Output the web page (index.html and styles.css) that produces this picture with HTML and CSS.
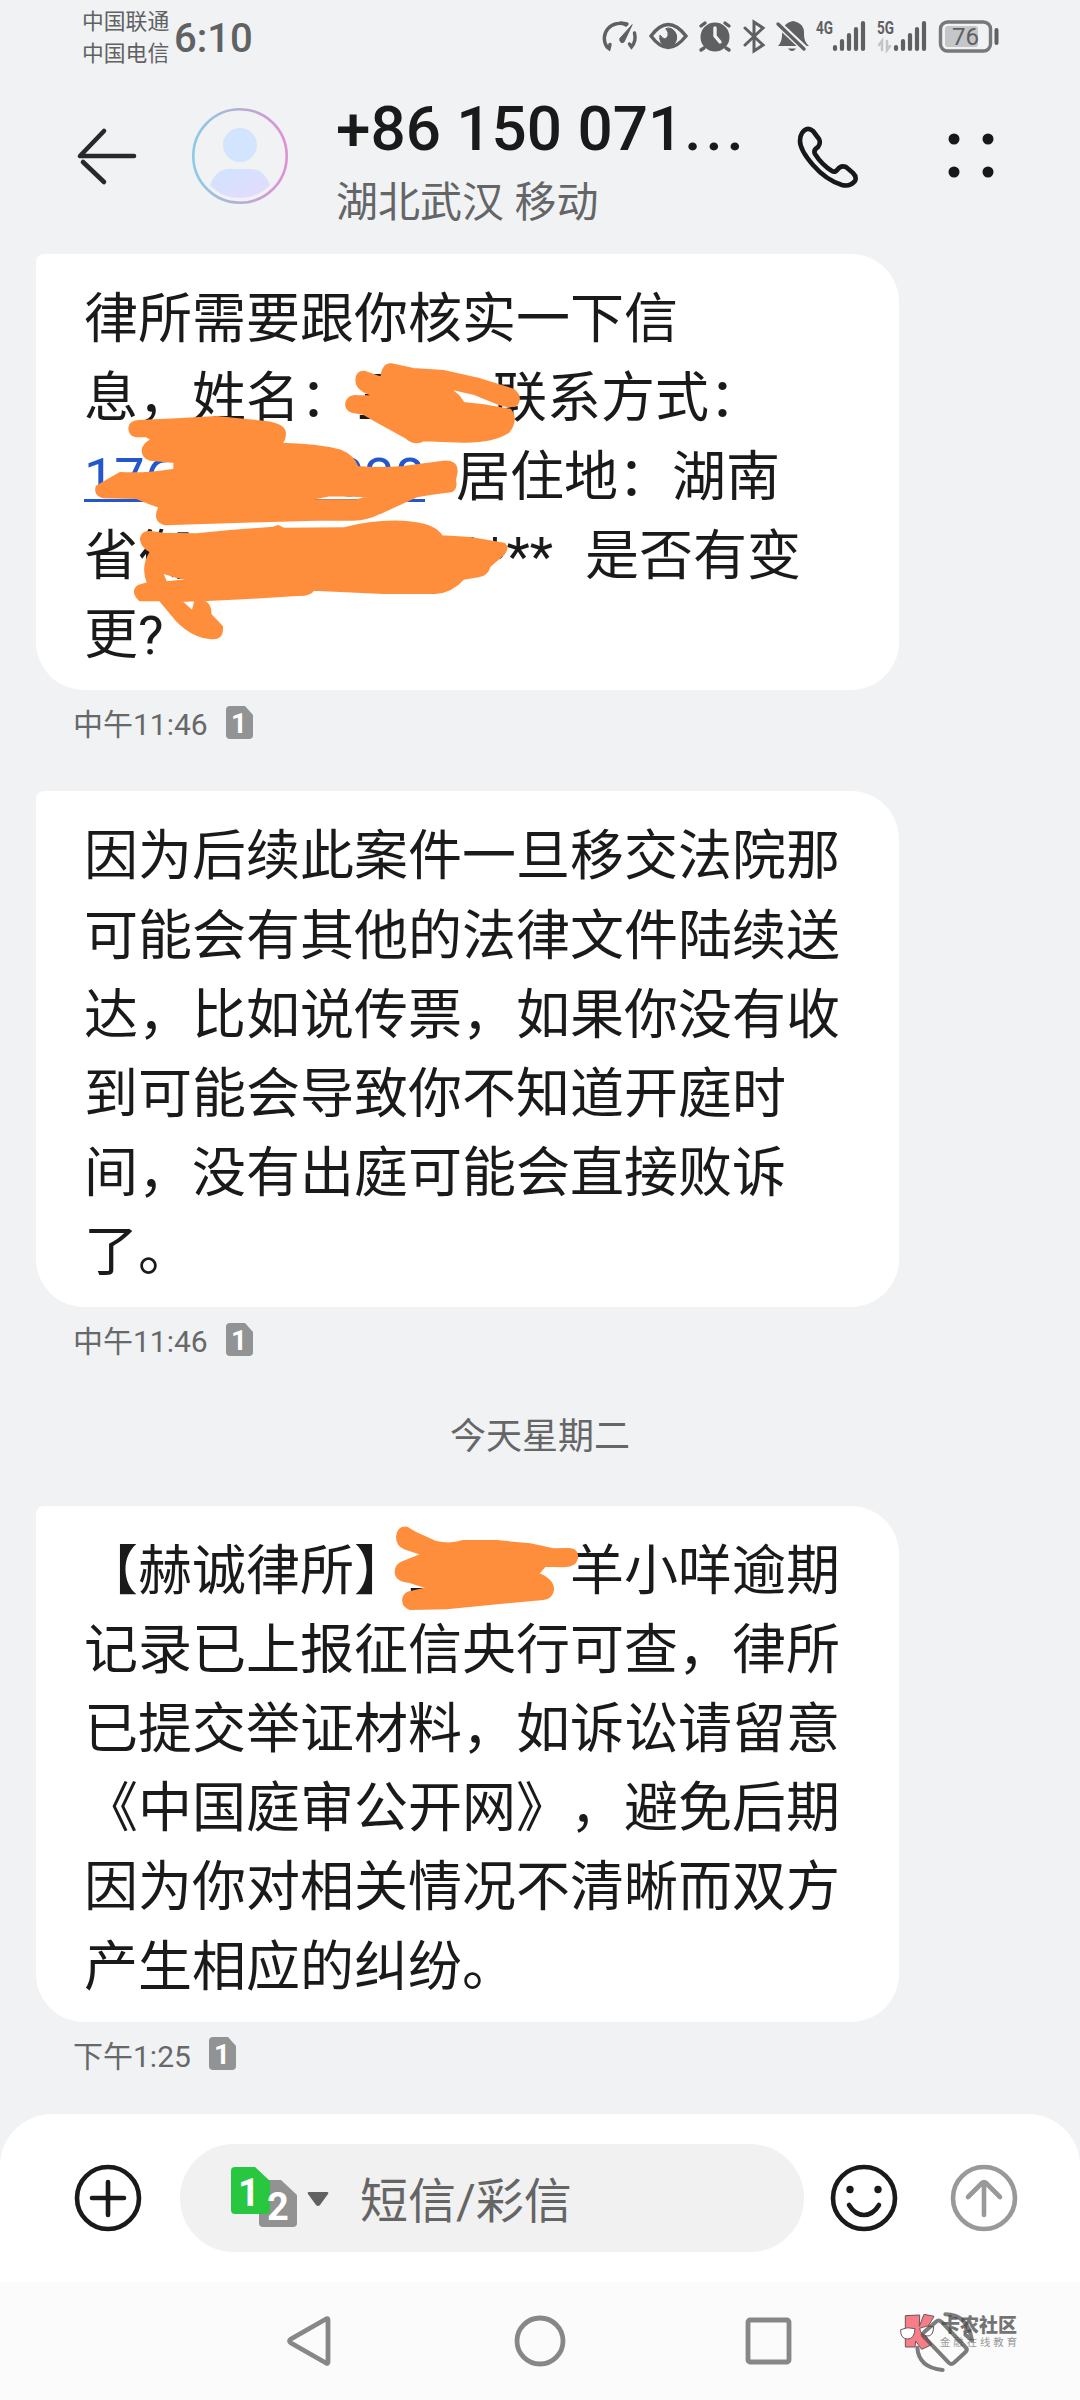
FILE: index.html
```html
<!DOCTYPE html>
<html lang="zh-CN">
<head>
<meta charset="utf-8">
<title>短信</title>
<link rel="stylesheet" href="styles.css">
</head>
<body>
<div class="phone">
  <header class="status">
    <div class="carriers"><span>中国联通</span><span>中国电信</span></div>
    <div class="clock">6:10</div>
    <svg class="status-icons" width="420" height="60" viewBox="0 0 420 60" fill="none" stroke="#5f6062" stroke-width="3.4" stroke-linecap="round">
      <path d="M26 25a15 15 0 0 0-19 22l2 1.500 1-4M34.500 33q2 8-3 14l-2-3M27 24l-6-1"/><path d="M32 25L24 42q-3 2-4-1t1-4z" fill="#5f6062" stroke-width="1"/>
      <path d="M51 36q17-23 35 0q-18 23-35 0z"/><path d="M69 28a8.500 9.500 0 1 1-9 7q5 7 8 1q1-4-2-7z" fill="#5f6062" stroke-width="1"/>
      <circle cx="115" cy="37" r="14.500" fill="#5f6062" stroke="none"/><path d="M101 26l4-3M129 26l-4-3M104 48l-3 2M126 48l3 2"/><path d="M115 28v8l5 6" stroke="#f1f2f4"/>
      <path d="M145 28l18 17-9 6V22l9 6-18 17" stroke-width="3"/>
      <path d="M178 46q4-4 4-11q0-12 11-14q12 2 11 14q0 7 5 11z" fill="#5f6062" stroke="none"/><path d="M173 19l36 34" stroke="#f1f2f4" stroke-width="7"/><path d="M178 24l26 25" stroke-width="3.400"/><path d="M188 48.500h8q-4 5-8 0z" fill="#5f6062" stroke="none"/>
      <g stroke-width="4.200"><path d="M235 47v2M242 41v8M249 35v14M256 29v20M263 23v26M296 47v2M303 41v8M310 35v14M317 29v20M324 23v26"/></g>
      <g stroke="#c3c4c6" stroke-width="2.500"><path d="M282 50V41l-3 4M287 41v9l3-4"/></g>
      <rect x="340.500" y="22" width="50" height="29" rx="7" stroke="#77787a" stroke-width="3.400"/><rect x="345" y="26" width="33" height="21" rx="3" fill="#c5c6c8" stroke="none"/><path d="M396.500 30v13" stroke-width="4"/>
      <g class="status-text"><text x="216" y="34" textLength="17" lengthAdjust="spacingAndGlyphs">4G</text><text x="277" y="34" textLength="17" lengthAdjust="spacingAndGlyphs">5G</text><text class="battery" x="352" y="45">76</text></g>
    </svg>
  </header>

  <section class="contact">
    <svg class="back" width="64" height="60" viewBox="0 0 64 60" fill="none" stroke="#28292b" stroke-width="4.600" stroke-linecap="round" stroke-linejoin="round"><path d="M29 5L5 30h54M8 36l21 20"/></svg>
    <svg class="avatar" width="98" height="98" viewBox="0 0 98 98">
      <defs><linearGradient id="ring"><stop offset="0" stop-color="#8ccbe8"/><stop offset=".5" stop-color="#b5add5"/><stop offset="1" stop-color="#df91d6"/></linearGradient><linearGradient id="person" x2="1" y2="1"><stop offset="0" stop-color="#cfe4fc"/><stop offset="1" stop-color="#e6daff"/></linearGradient></defs>
      <circle cx="49" cy="49" r="46.700" fill="none" stroke="url(#ring)" stroke-width="2.600"/><circle cx="49" cy="38" r="17" fill="#d2e4fe"/><path d="M19 78q6-16 19-16h22q13 0 19 16q-12 13-30 13T19 78z" fill="url(#person)"/>
    </svg>
    <div class="who"><h1>+86 150 071<span class="dots">...</span></h1><p>湖北武汉 移动</p></div>
    <svg class="call" width="64" height="64" viewBox="0 0 64 64" fill="none" stroke="#17181a" stroke-width="4.600" stroke-linejoin="round"><path d="M6 9q5-7 11-2l6 8q2 4-1 8q-5 3-3 7q7 11 17 17q3 2 6-2q3-4 8-2l7 6q4 4 2 8q-5 6-13 4Q30 56 17 41T4 17q0-5 2-8z"/></svg>
    <svg class="more" width="48" height="48" viewBox="0 0 48 48" fill="#17181a"><circle cx="7" cy="7" r="5.500"/><circle cx="41" cy="7" r="5.500"/><circle cx="7" cy="40" r="5.500"/><circle cx="41" cy="40" r="5.500"/></svg>
  </section>

  <main class="thread">
    <article class="message">
      <div class="bubble">
        <div>律所需要跟你核实一下信</div>
        <div class="line"><span>息，姓名：</span><span class="gap name"><i>王</i></span><span>联系方式：</span></div>
        <div class="line"><span class="link"><span>176</span><span>038</span></span><span class="place">居住地：湖南</span></div>
        <div class="line"><span>省</span><span class="gap address"><i>衡</i><b>****</b></span><span>是否有变</span></div>
        <div>更?</div>
        <svg class="marks" width="500" height="420" viewBox="0 0 1500 1260" fill="#ff8e3c" stroke="#ff8e3c" stroke-width="8" stroke-linejoin="round" fill-rule="evenodd">
          <path d="M980 390Q980 365 1003 366L1055 385Q1058 342 1084 344L1150 358 1240 364 1344 387 1450 420Q1475 440 1460 463 1440 474 1400 458L1330 430 1252 412 1285 438 1300 460 1360 467 1440 480Q1463 510 1435 545 1390 575 1300 574L1180 570Q1155 584 1130 563L1040 513 1000 490 965 484Q945 475 951 455 960 435 985 440L1040 440 1000 422Q980 410 980 390Z"/>
          <path d="M299 535Q300 516 325 514L440 509 560 502 680 514Q765 520 764 550 764 570 752 582 860 584 930 602 970 618 982 652 1050 658 1120 652L1240 636Q1280 633 1279 665L1274 690Q1282 725 1250 724 1200 730 1160 738L1050 788Q1010 808 970 808L860 808 640 814 405 822Q368 812 390 770 355 758 320 743L220 741Q194 735 201 710L270 670Q350 674 434 660L434 635 360 628Q335 618 340 594 350 574 370 570L350 558 320 558Q300 555 299 535ZM780 758L860 752 980 752 1025 738 900 735Z"/>
          <path d="M334 865Q338 845 360 847L400 852 500 854 600 844 730 834 745 829 760 837 940 836Q1030 812 1120 816 1215 822 1235 860L1322 865 1422 882Q1435 895 1420 912L1378 948Q1370 975 1345 978L1300 985Q1265 1025 1215 1028L1060 1028 850 1018Q840 1036 800 1034L640 1044 515 1050Q542 1062 541 1095L575 1130Q578 1170 540 1163 490 1160 440 1110L390 1050 330 1050Q304 1025 325 1009L355 1000Q334 950 364 905 334 890 334 865ZM394 965L408 998 488 990 440 980ZM450 1052L488 1086 498 1050Z"/>
        </svg>
      </div>
      <div class="meta"><span>中午11:46</span><svg class="sim" width="27" height="33" viewBox="0 0 27 33"><path d="M4 0h15l8 9v20q0 4-4 4H4q-4 0-4-4V4q0-4 4-4z"/><text x="13" y="27">1</text></svg></div>
    </article>

    <article class="message">
      <div class="bubble">
        <div>因为后续此案件一旦移交法院那</div>
        <div>可能会有其他的法律文件陆续送</div>
        <div>达，比如说传票，如果你没有收</div>
        <div>到可能会导致你不知道开庭时</div>
        <div>间，没有出庭可能会直接败诉</div>
        <div>了。</div>
      </div>
      <div class="meta"><span>中午11:46</span><svg class="sim" width="27" height="33" viewBox="0 0 27 33"><path d="M4 0h15l8 9v20q0 4-4 4H4q-4 0-4-4V4q0-4 4-4z"/><text x="13" y="27">1</text></svg></div>
    </article>

    <div class="date">今天星期二</div>

    <article class="message">
      <div class="bubble">
        <div class="line"><span>【赫诚律所】</span><span class="gap client"><i>王</i></span><span>羊小咩逾期</span></div>
        <div>记录已上报征信央行可查，律所</div>
        <div>已提交举证材料，如诉讼请留意</div>
        <div>《中国庭审公开网》，避免后期</div>
        <div>因为你对相关情况不清晰而双方</div>
        <div>产生相应的纠纷。</div>
        <svg class="mark-client" width="300" height="130" viewBox="0 0 900 390" fill="#ff8e3c" stroke="#ff8e3c" stroke-width="8" stroke-linejoin="round"><path d="M172 110Q175 82 200 84L225 99 285 126Q330 138 370 124L470 124 570 134 640 149 685 148Q714 148 710 175 704 198 670 198L615 196 593 222Q640 240 638 270 634 293 610 296L520 304 320 324 210 326Q187 318 191 295 195 278 215 276L268 264 205 244Q168 240 168 215 168 195 190 187L250 163 195 145Q172 135 172 110Z"/></svg>
      </div>
      <div class="meta"><span>下午1:25</span><svg class="sim" width="27" height="33" viewBox="0 0 27 33"><path d="M4 0h15l8 9v20q0 4-4 4H4q-4 0-4-4V4q0-4 4-4z"/><text x="13" y="27">1</text></svg></div>
    </article>
  </main>

  <footer class="composer">
    <svg class="round-btn" width="68" height="68" viewBox="0 0 68 68"><circle cx="34" cy="34" r="31"/><path d="M34 18v33M18 34h12M42 34h8M30 34h12"/></svg>
    <div class="field">
      <svg class="sim-picker" width="98" height="62" viewBox="0 0 98 62">
        <path d="M32 13h18l16 15v28q0 4-4 4H32q-4 0-4-4V17q0-4 4-4z" fill="#929292"/><path d="M4 0h20l15 14v29q0 4-4 4H4q-4 0-4-4V4q0-4 4-4z" fill="#29c63f"/>
        <text class="sim-number" x="18" y="39">1</text><text class="sim-number" x="47" y="53">2</text><path d="M78 25h18q2 0 1 2l-8 11q-2 2-4 0l-8-11q-1-2 1-2z" fill="#616161"/>
      </svg>
      <span>短信/彩信</span>
    </div>
    <svg class="round-btn smile" width="68" height="68" viewBox="0 0 68 68"><circle cx="34" cy="34" r="31"/><path d="M19 41q6 10 15 10t15-10"/><circle class="eye" cx="20" cy="25.500" r="3.700"/><circle class="eye" cx="48" cy="25.500" r="3.700"/></svg>
    <svg class="round-btn send" width="68" height="68" viewBox="0 0 68 68"><circle cx="34" cy="34" r="31"/><path d="M34 51V18M18 33l14-14q2-2 4 0l14 14"/></svg>
  </footer>

  <nav class="navbar">
    <svg width="44" height="52" viewBox="0 0 44 52"><path d="M39 4q2-1 2 1v42q0 2-2 1L4 28q-3-2 0-4z"/></svg>
    <svg width="52" height="52" viewBox="0 0 52 52"><circle cx="26" cy="26" r="23"/></svg>
    <svg width="48" height="48" viewBox="0 0 48 48"><rect x="3" y="3" width="41" height="42" rx="2"/></svg>
    <svg class="rotate" width="160" height="80" viewBox="0 0 480 240">
      <g fill="#f77d88" stroke="#6d5558" stroke-width="3"><path d="M76 44l43-2-1 34 14-36 30 6-30 51 23 34-30 14-18-25-2 18H76z"/><path d="M62 86q20-10 43-3-2 32-23 31T62 86zM119 82q22-11 42-5-1 30-20 28t-22-23z" fill="#fff"/></g>
      <g class="brand"><text x="183" y="92" class="brand-name">卡农社区</text><text x="180" y="134" class="brand-sub">金融在线教育</text></g>
      <g fill="none" stroke="#4b4b4b" stroke-opacity=".72" stroke-width="12" stroke-linecap="round" stroke-linejoin="round"><path d="M132 94l36-32q8-7 16 0l72 76q8 8 0 16l-34 31q-8 8-16 0l-75-79q-7-6 1-12z"/><path d="M112 140q4 60 76 67M196 40q67 0 80 78l-20-17"/></g>
    </svg>
  </nav>
</div>
</body>
</html>
```
FILE: styles.css
```css
* { box-sizing: border-box; margin: 0; padding: 0; }
body { background: #f1f2f4; color: #1a1a1b; font-family: Roboto, "Noto Sans CJK SC", sans-serif; text-spacing-trim: space-all; }
svg { display: block; flex-shrink: 0; }
.phone { width: 1080px; height: 2400px; display: flex; flex-direction: column; overflow: hidden; }

.status { height: 78px; display: flex; flex-shrink: 0; padding-left: 82px; color: #606163; }
.carriers { display: flex; flex-direction: column; padding-top: 6px; width: 92px; font-size: 21.800px; line-height: 32px; }
.clock { width: 426px; font-size: 40px; line-height: 77px; font-weight: 500; }
.status-text { fill: #5f6062; stroke: none; font-size: 18px; font-weight: 700; }
.battery { font-size: 24px; font-weight: 400; }

.contact { height: 176px; display: flex; flex-shrink: 0; padding-left: 75px; }
.back { margin-top: 48px; }
.avatar { margin: 29px 0 0 52px; }
.who { width: 507px; padding-left: 47px; }
.who h1 { font-size: 62px; line-height: 74px; margin-top: 14px; font-weight: 500; white-space: nowrap; }
.dots { letter-spacing: 4px; margin-left: 1px; }
.who p { font-size: 42px; line-height: 60px; margin-top: 7px; color: #646567; }
.call { margin-top: 46px; }
.more { margin: 54px 0 0 87px; }

.thread { height: 1860px; flex-shrink: 0; padding-left: 36px; }
.message { margin-bottom: 37px; }
.bubble { position: relative; width: 863px; padding: 26px 48px 15px; border-radius: 8px 48px 48px 48px; background: #fff; font-size: 54px; line-height: 79.100px; white-space: nowrap; }
.line { display: flex; height: 79.100px; }
.gap { display: flex; flex-shrink: 0; }
.gap i { font-style: normal; }
.gap b { font-weight: 400; margin-left: auto; }
.name { width: 139px; padding-left: 3px; }
.address { width: 447px; padding-right: 32px; }
.client { width: 162px; }
.link { display: flex; justify-content: space-between; width: 341px; color: #2358cc; background: linear-gradient(#2358cc, #2358cc) 0 61px / 100% 3px no-repeat; }
.place { margin-left: 31px; }
.marks { position: absolute; left: -6px; top: -4px; }
.mark-client { position: absolute; left: 304px; top: -6px; }
.meta { height: 64px; display: flex; align-items: center; gap: 18px; padding-left: 37px; color: #67686a; font-size: 30px; }
.sim { fill: #929394; }
.sim text { fill: #fff; font-size: 28px; font-weight: 700; text-anchor: middle; }
.date { height: 98px; line-height: 58px; text-align: center; margin-left: -36px; font-size: 36px; color: #656668; }

.composer { height: 168px; flex-shrink: 0; display: flex; align-items: center; padding-left: 74px; background: #fff; border-radius: 52px 52px 0 0; }
.round-btn { fill: none; stroke: #1a1a1b; stroke-width: 4.600; stroke-linecap: round; stroke-linejoin: round; }
.field { width: 624px; height: 108px; margin: 0 26px 0 38px; padding: 0 0 3px 51px; border-radius: 54px; background: #f1f1f1; display: flex; align-items: center; gap: 31px; color: #656565; font-size: 48px; }
.sim-picker { overflow: visible; margin-top: 3px; }
.sim-number { fill: #fff; font-size: 38px; font-weight: 700; text-anchor: middle; }
.eye { fill: #1a1a1b; stroke: none; }
.send { margin-left: 52px; stroke: #999; }

.navbar { height: 118px; flex-shrink: 0; display: flex; align-items: center; padding-left: 287px; background: #fbfbfb; fill: none; stroke: #878787; stroke-width: 4.800; }
.navbar svg + svg { margin-left: 183px; }
.navbar svg:nth-child(3) { margin-left: 179px; }
.navbar .rotate { margin-left: 87px; }
.brand { fill: #747474; stroke: none; }
.brand-name { font-size: 57px; font-weight: 900; }
.brand-sub { font-size: 31px; letter-spacing: 9px; fill: #999; }
```
